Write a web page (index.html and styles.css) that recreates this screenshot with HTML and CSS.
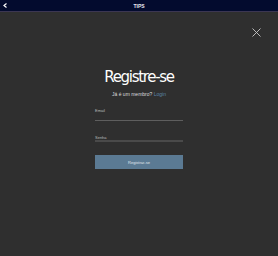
FILE: index.html
```html
<!DOCTYPE html>
<html lang="pt">
<head>
<meta charset="utf-8">
<link rel="stylesheet" href="styles.css">
</head>
<body>
<header class="topbar">
  <span class="back"><svg width="4" height="5" viewBox="0 0 4 5"><path d="M3.5 0.5 L1 2.5 L3.5 4.5" stroke="#fff" stroke-width="1.2" fill="none"/></svg></span>
  <span class="title">TIPS</span>
</header>
<main class="page">
  <div class="closebar">
    <svg class="close" width="9" height="9" viewBox="0 0 9 9"><path d="M0.5 0.5 L8.5 8.5 M8.5 0.5 L0.5 8.5" stroke="#c8c8c8" stroke-width="0.9"/></svg>
  </div>
  <section class="form">
    <h1>Registre-se</h1>
    <p class="member">Já é um membro? <a>Login</a></p>
    <label class="field">
      <span class="lbl">Email</span>
      <span class="line"></span>
    </label>
    <label class="field pw">
      <span class="lbl">Senha</span>
      <span class="line"></span>
    </label>
    <button class="btn">Registrar-se</button>
  </section>
</main>
</body>
</html>
```
FILE: styles.css
```css
html, body { margin: 0; padding: 0; }
body {
  width: 278px; height: 256px; overflow: hidden;
  background: #2f2f2f;
  font-family: "Liberation Sans", Arial, sans-serif;
  color: #fff;
}
.topbar {
  height: 11px;
  background: #030b2e;
  border-bottom: 1px solid #3b3652;
  position: relative;
  display: flex; align-items: center; justify-content: center;
}
.back { position: absolute; left: 3px; top: 3px; line-height: 0; }
.title { font-size: 5px; font-weight: bold; color: #e8e8ee; }
.page { display: flex; flex-direction: column; }
.closebar { display: flex; justify-content: flex-end; padding: 16px 17px 0 0; }
.close { display: block; }
.form { width: 88px; margin: 31px 0 0 95px; display: flex; flex-direction: column; }
h1 {
  margin: 0; font-family: "DejaVu Sans", sans-serif; font-weight: 400;
  font-size: 15px; line-height: 18px; text-align: center; letter-spacing: -1.3px;
}
.member { margin: 5px 0 0; font-size: 5px; line-height: 7px; text-align: center; color: #ddd; }
.member a { color: #5a83a8; }
.field { display: flex; flex-direction: column; margin-top: 10px; }
.lbl { font-size: 4px; line-height: 5px; color: #bbb; }
.line { height: 1px; background: #5e5e5e; margin-top: 7px; }
.field.pw { margin-top: 14px; }
.field.pw .line { height: 2px; margin-top: 0; background: #4a4a4a; }
.btn {
  margin-top: 13px; height: 14px; border: none; padding: 0;
  background: #5b7a93; color: #e0e6ec; font-family: "Liberation Sans", sans-serif; font-size: 4px;
}
```
